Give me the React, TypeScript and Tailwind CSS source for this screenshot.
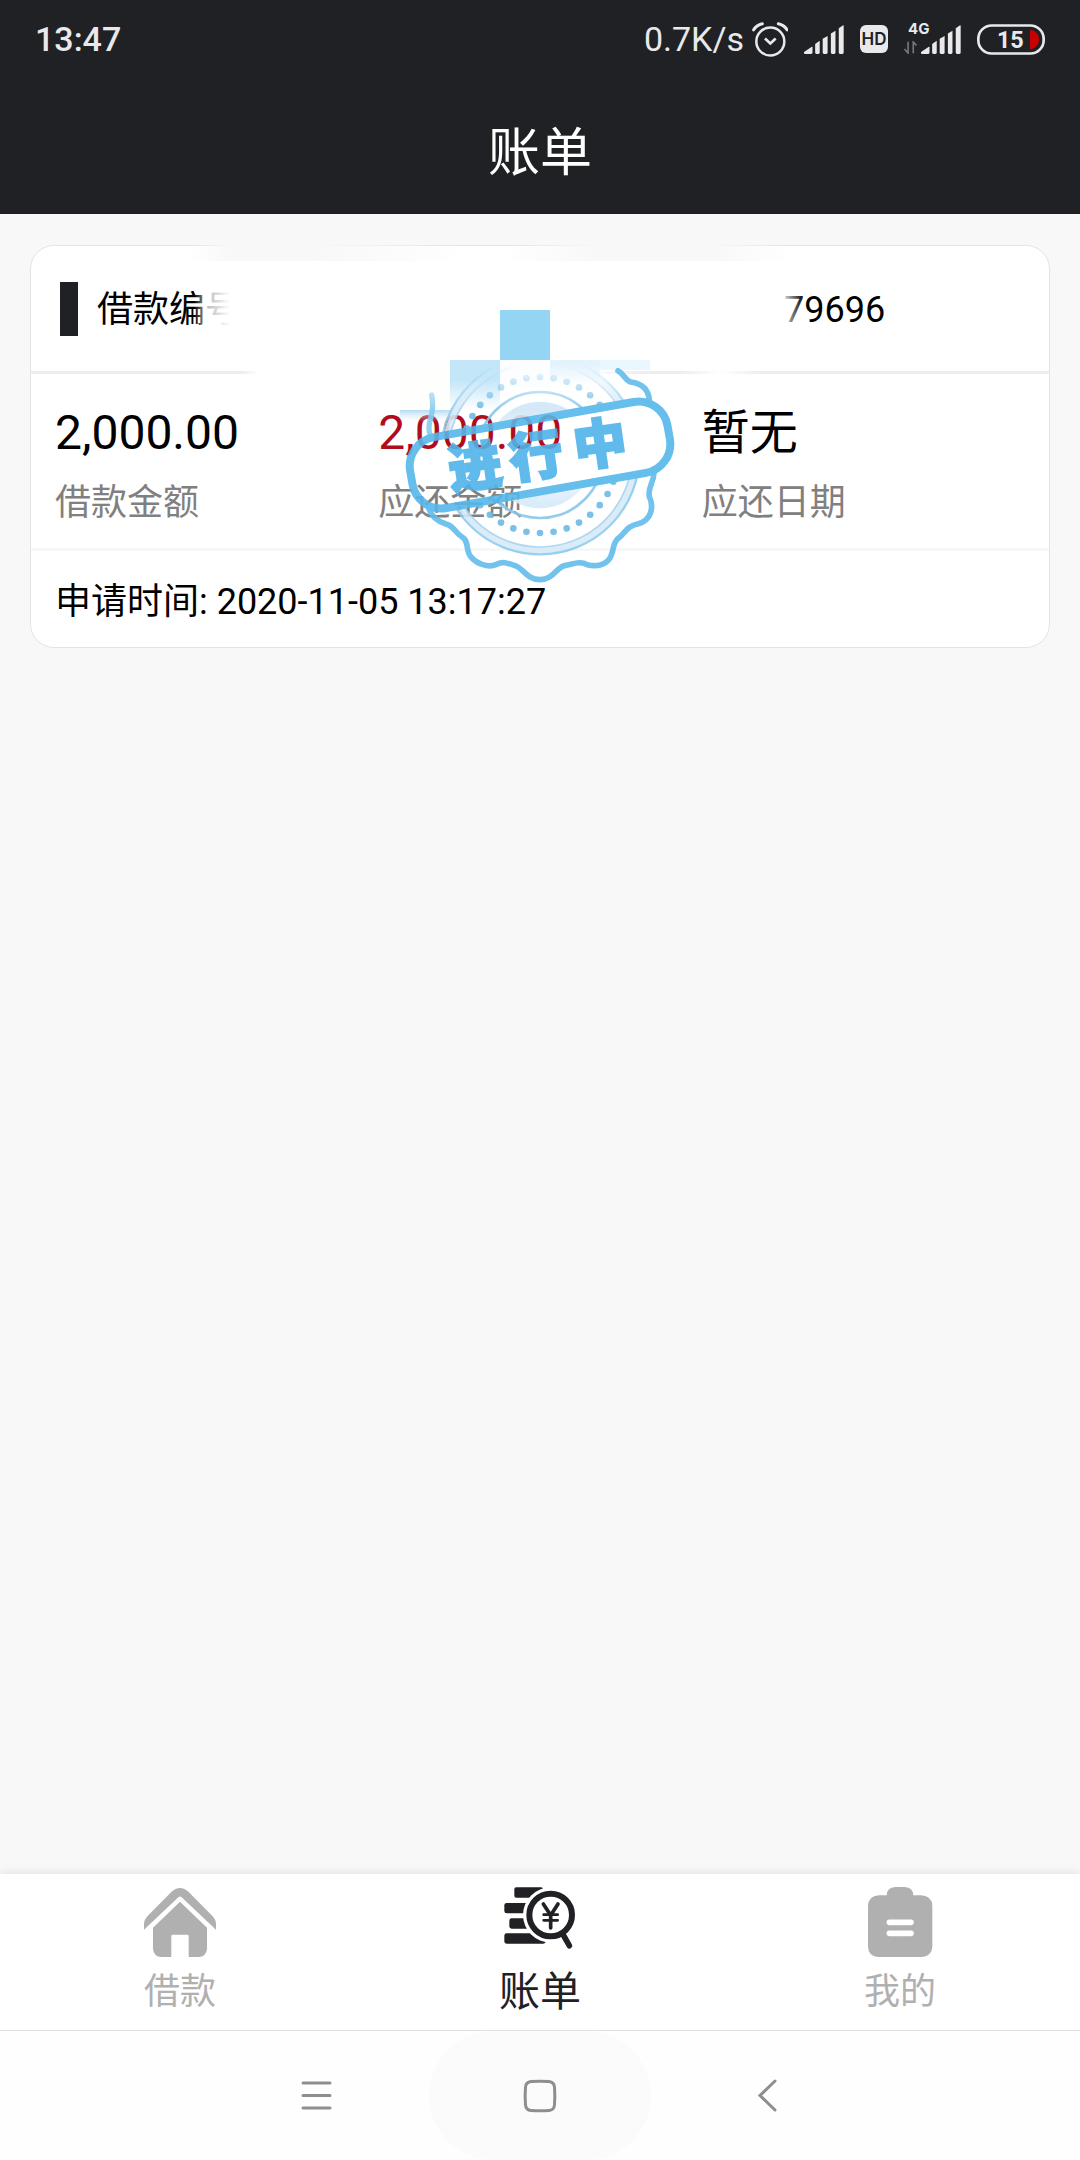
import React from 'react';

function SignalBars({ className }: { className?: string }) {
  return (
    <svg viewBox="0 0 122 88" className={className} fill="#e9e9eb" aria-hidden="true">
      <path d="M0 82 L24 66 Q26 65 26 68 V84 Q26 88 22 88 H2 Q-2 85 0 82Z" />
      <path d="M34 58 L48 48 V84 Q48 88 44 88 H38 Q34 88 34 84Z" />
      <path d="M57 42 L72 33 V84 Q72 88 68 88 H61 Q57 88 57 84Z" />
      <path d="M82 26 L96 17 V84 Q96 88 92 88 H86 Q82 88 82 84Z" />
      <path d="M106 10 L118 1 Q121 -1 121 3 V84 Q121 88 117 88 H110 Q106 88 106 84Z" />
    </svg>
  );
}

function AlarmIcon() {
  return (
    <svg viewBox="0 0 108 104" className="h-[35px] w-9" fill="none" stroke="#e9e9eb" aria-hidden="true">
      <circle cx="55" cy="58" r="42" strokeWidth="7.5" />
      <path d="M39 49 L55 64 L71 49" strokeWidth="8" />
      <path d="M5 23 Q13 9 31 5 M105 23 Q97 9 79 5" strokeWidth="9" strokeLinecap="round" />
    </svg>
  );
}

function MobileSignal() {
  return (
    <div className="relative h-[29px] w-[57px]">
      <svg viewBox="0 0 42 40" className="absolute bottom-0 left-0 h-[13px] w-[14px]" stroke="#77787b" strokeWidth="5" fill="none" aria-hidden="true">
        <path d="M12 2 V37 L1 25" />
        <path d="M28 38 V3 L38 14" />
      </svg>
      <span className="absolute -top-[5px] left-1 font-[Inter,sans-serif] text-[15px] leading-[18px] font-bold">4G</span>
      <SignalBars className="absolute right-0 bottom-0 h-[29px] w-10" />
    </div>
  );
}

function BatteryIcon() {
  return (
    <svg viewBox="0 0 204 92" className="h-[31px] w-[68px]" aria-label="电量 15%">
      <rect x="4" y="4" width="196" height="84" rx="40" fill="none" stroke="#e9e9eb" strokeWidth="8" />
      <path d="M159 17 Q186 22 186 46 Q186 70 159 76Z" fill="#c80000" />
      <text x="100" y="71" textAnchor="middle" fontFamily="Roboto, sans-serif" fontSize="70" fontWeight="700" fill="#e9e9eb">15</text>
    </svg>
  );
}

function StatusBar() {
  return (
    <div className="flex h-[88px] items-center justify-between px-[35px] pb-[10px] text-[#e9e9eb]">
      <span className="text-[34px] leading-10 font-medium">13:47</span>
      <div className="flex items-center gap-4">
        <div className="flex items-center gap-2">
          <span className="text-[34px] leading-10">0.7K/s</span>
          <AlarmIcon />
        </div>
        <SignalBars className="h-[29px] w-10" />
        <span className="flex h-7 w-7 items-center justify-center rounded-md bg-[#e9e9eb] font-[Inter,sans-serif] text-[17px] leading-7 font-semibold text-[#202124]">
          HD
        </span>
        <MobileSignal />
        <BatteryIcon />
      </div>
    </div>
  );
}

const DOTS = Array.from({ length: 36 }, (_, i) => {
  const a = (i * Math.PI) / 18;
  return { x: 480 + 234 * Math.sin(a), y: 495 - 234 * Math.cos(a) };
});

function ProgressStamp() {
  return (
    <svg viewBox="0 0 960 930" className="h-[310px] w-80" role="img" aria-label="进行中">
      <defs>
        <mask id="seal" maskUnits="userSpaceOnUse" x="0" y="0" width="960" height="930">
          <rect width="960" height="930" fill="white" />
          <rect x="85" y="385" width="790" height="220" rx="88" fill="black" transform="rotate(-10 480 495)" />
        </mask>
        <linearGradient id="fade" x1="0" y1="225" x2="0" y2="400" gradientUnits="userSpaceOnUse">
          <stop offset="0" stopColor="black" />
          <stop offset="0.2" stopColor="#444" />
          <stop offset="0.75" stopColor="white" />
        </linearGradient>
        <mask id="top" maskUnits="userSpaceOnUse" x="0" y="0" width="960" height="930">
          <rect width="960" height="930" fill="url(#fade)" />
        </mask>
        <linearGradient id="disc" x1="0" y1="0" x2="0" y2="1">
          <stop offset="0" stopColor="#c9e2f6" />
          <stop offset="0.5" stopColor="#ffffff" />
          <stop offset="1" stopColor="#d3e9f9" />
        </linearGradient>
        <linearGradient id="tileA" x1="0" y1="0" x2="0" y2="1">
          <stop offset="0.4" stopColor="#c3e6f9" />
          <stop offset="1" stopColor="#c3e6f9" stopOpacity="0" />
        </linearGradient>
        <linearGradient id="tileB" x1="0" y1="0" x2="0" y2="1">
          <stop offset="0.2" stopColor="#e3f3fd" />
          <stop offset="1" stopColor="#e3f3fd" stopOpacity="0" />
        </linearGradient>
        <linearGradient id="tileC" x1="0" y1="0" x2="0" y2="1">
          <stop offset="0" stopColor="#9fd3ef" stopOpacity="0.8" />
          <stop offset="1" stopColor="#dff1fb" stopOpacity="0" />
        </linearGradient>
      </defs>
      <rect x="360" y="60" width="150" height="150" fill="#93d5f3" />
      <rect x="60" y="210" width="150" height="150" fill="#fefefc" />
      <rect x="210" y="210" width="150" height="150" fill="url(#tileA)" />
      <rect x="360" y="210" width="150" height="80" fill="#fbfdff" />
      <rect x="510" y="210" width="150" height="75" fill="url(#tileB)" />
      <rect x="660" y="210" width="150" height="30" fill="#e8f8fe" />
      <rect x="60" y="360" width="150" height="36" fill="url(#tileC)" />
      <g opacity="0.9">
        <g mask="url(#top)">
          <g mask="url(#seal)" fill="none">
            <circle cx="480" cy="495" r="286" stroke="#d6eaf8" strokeWidth="18" />
            <circle cx="480" cy="495" r="298" stroke="#8fcbee" strokeWidth="7" />
            <circle cx="480" cy="495" r="276" stroke="#a9d3ef" strokeWidth="5" />
            <circle cx="480" cy="495" r="189" stroke="#8ac7ea" strokeWidth="8" />
            <circle cx="480" cy="495" r="160" fill="url(#disc)" />
            <g fill="#6dbbe5">
              {DOTS.map((d, i) => (
                <circle key={i} cx={d.x} cy={d.y} r="10" />
              ))}
            </g>
          </g>
          <path
            d="M155 315 Q162 350 152 385 Q143 410 150 435"
            fill="none"
            stroke="#86ccf0"
            strokeWidth="16"
            strokeLinecap="round"
          />
        </g>
        <g fill="none" stroke="#62bcec" strokeWidth="17" strokeLinecap="round" strokeLinejoin="round">
          <path d="M714 242 C730 250 735 270 752 276 C785 280 805 298 808 330" />
          <path d="M822 550 C820 580 802 595 808 620 C822 650 815 690 775 701 C740 708 736 728 715 745 C698 758 702 780 692 800 C678 828 645 830 622 824 C600 812 580 822 556 826 C530 830 522 868 480 869 C440 868 432 838 408 828 C385 820 365 812 348 824 C325 834 290 822 272 800 C256 780 268 752 245 740 C225 728 222 708 198 702 C170 694 155 680 146 655" />
        </g>
        <g transform="rotate(-10 480 495)">
          <rect x="88" y="387" width="784" height="216" rx="88" fill="none" stroke="#56b7ea" strokeWidth="24" />
        </g>
        <g
          fill="#4fb3e9"
          stroke="#4fb3e9"
          strokeWidth="7"
          fontFamily="'Noto Sans CJK SC', sans-serif"
          fontSize="160"
          fontWeight="900"
          textAnchor="middle"
        >
          <text x="285" y="587" transform="rotate(-8 285 530)">进</text>
          <text x="468" y="556" transform="rotate(-8 468 498)">行</text>
          <text x="660" y="520" transform="rotate(-8 660 462)">中</text>
        </g>
      </g>
    </svg>
  );
}

function Field({ value, label, accent }: { value: string; label: string; accent?: boolean }) {
  return (
    <div className="flex-1">
      <dd className={accent ? 'text-5xl leading-[56px] text-[#b00d1c]' : 'text-5xl leading-[56px] text-black'}>
        {value}
      </dd>
      <dt className="mt-4 text-4xl leading-[52px] text-[#808080]">{label}</dt>
    </div>
  );
}

function BillCard() {
  return (
    <article className="relative mx-[30px] mt-[31px] rounded-3xl border border-[#e4e4e4] bg-white">
      <div className="relative flex h-[125px] items-center pl-[29px]">
        <span className="h-[54px] w-[18px] bg-[#202124]" />
        <h2 className="ml-[19px] pt-[2px] text-4xl leading-[48px] text-black">借款编号</h2>
        <span className="ml-[543px] pt-[2px] text-4xl leading-[48px] text-black">79696</span>
        <div className="absolute top-10 left-[163px] h-12 w-[610px] bg-[linear-gradient(to_right,transparent,rgba(255,255,255,0.75)_14px,white_36px,white_586px,transparent)]" />
      </div>
      <div className="h-[3px] bg-[linear-gradient(to_right,#ededed_210px,white_228px,white_560px,#ededed_610px,#ededed_650px,white_690px,#ededed_730px)]" />
      <dl className="flex h-[174px] px-6 pt-[31px]">
        <Field value="2,000.00" label="借款金额" />
        <Field value="2,000.00" label="应还金额" accent />
        <Field value="暂无" label="应还日期" />
      </dl>
      <div className="h-[3px] bg-[#f7f7f7]" />
      <p className="px-6 pt-[27px] pb-[21px] text-4xl leading-[48px] text-black">申请时间: 2020-11-05 13:17:27</p>
      <div className="absolute -top-px left-[160px] h-4 w-[600px] bg-[linear-gradient(to_right,transparent,#f8f8f8_40px,#f8f8f8_120px,transparent_280px,transparent_310px,#f8f8f8_410px,#f8f8f8_520px,transparent)]" />
      <div className="pointer-events-none absolute top-11 left-[349px]">
        <ProgressStamp />
      </div>
    </article>
  );
}

function HomeIcon() {
  return (
    <svg viewBox="0 0 216 216" className="h-[72px] w-[72px]" fill="#b0b0b0" aria-hidden="true">
      <path d="M0 131 V112 Q1 101 10 91 L82 18 Q108 -6 134 18 L206 91 Q215 101 216 112 V131 L113 34 Q108 29 103 34Z" />
      <path d="M108 47 L189 125 V188 Q187 212 164 213 H136 Q134 213 134 210 V150 Q134 146 130 146 H86 Q82 146 82 150 V210 Q82 213 80 213 H52 Q29 212 27 188 V125Z" />
    </svg>
  );
}

function BillIcon() {
  return (
    <svg viewBox="0 0 216 216" className="h-[72px] w-[72px]" aria-hidden="true">
      <g fill="#202124">
        <rect x="31" y="4" width="86" height="31" rx="6" />
        <rect x="1" y="51" width="86" height="31" rx="7" />
        <rect x="16" y="97" width="70" height="31" rx="7" />
        <rect x="1" y="142" width="124" height="31" rx="7" />
      </g>
      <circle cx="140" cy="87" r="83" fill="white" />
      <g fill="none" stroke="#202124" strokeLinecap="round">
        <circle cx="140" cy="87" r="64" strokeWidth="18" />
        <path d="M178 147 L196 179" strokeWidth="17" />
        <path d="M118 54 L140 88 L162 54 M140 88 V126" strokeWidth="11" />
        <path d="M119 86 H161 M119 103 H161" strokeWidth="8" />
      </g>
    </svg>
  );
}

function MineIcon() {
  return (
    <svg viewBox="0 0 216 216" className="h-[72px] w-[72px]" aria-hidden="true">
      <path
        fill="#b0b0b0"
        d="M68 28 Q69 4 94 3 H122 Q147 4 148 28 H172 Q204 30 205 60 V182 Q203 212 172 213 H44 Q13 212 12 182 V60 Q13 30 44 28Z"
      />
      <path d="M76 109 H141 M76 142 H141" stroke="white" strokeWidth="17" strokeLinecap="round" />
    </svg>
  );
}

function TabBar() {
  return (
    <nav className="grid grid-cols-3 bg-white shadow-[0_-2px_8px_rgba(0,0,0,0.08)]">
      <a href="#loan" className="flex flex-col items-center gap-[10px] pt-3 pb-[14px] text-4xl text-[#b0b0b0]">
        <HomeIcon />
        <span className="leading-[48px]">借款</span>
      </a>
      <a href="#bill" aria-current="page" className="flex flex-col items-center gap-[10px] pt-3 pb-[14px] text-[41px] text-[#202124]">
        <BillIcon />
        <span className="leading-[48px]">账单</span>
      </a>
      <a href="#mine" className="flex flex-col items-center gap-[10px] pt-3 pb-[14px] text-4xl text-[#b0b0b0]">
        <MineIcon />
        <span className="leading-[48px]">我的</span>
      </a>
    </nav>
  );
}

function SystemNav() {
  return (
    <div className="flex h-[130px] justify-center border-t border-[#e0e0e0] bg-[#fefefe]">
      <button aria-label="菜单" className="flex w-[222px] items-center justify-center">
        <svg viewBox="0 0 36 36" className="h-9 w-9" stroke="#8e8e8e" strokeWidth="3" strokeLinecap="round">
          <path d="M3 5 H30 M3 17.5 H30 M3 30 H30" />
        </svg>
      </button>
      <button aria-label="主页" className="flex w-[222px] items-center justify-center rounded-full bg-[#fbfbfb]">
        <svg viewBox="0 0 36 36" className="h-9 w-9" fill="none" stroke="#8e8e8e" strokeWidth="3">
          <path d="M9 3.5 Q18 2.8 27 3.5 Q32 4 32.5 9 Q33.2 18 32.5 27 Q32 32 27 32.5 Q18 33.2 9 32.5 Q4 32 3.5 27 Q2.8 18 3.5 9 Q4 4 9 3.5Z" />
        </svg>
      </button>
      <button aria-label="返回" className="flex w-[222px] items-center justify-center">
        <svg viewBox="0 0 36 36" className="h-9 w-9" fill="none" stroke="#8e8e8e" strokeWidth="3" strokeLinecap="round">
          <path d="M31 3 L16 17.5 L31 32" />
        </svg>
      </button>
    </div>
  );
}

export default function App() {
  return (
    <div className="flex min-h-screen flex-col bg-[#f8f8f8] font-[Roboto,'Noto_Sans_CJK_SC',sans-serif]">
      <header className="bg-[#202124]">
        <StatusBar />
        <h1 className="flex h-[126px] items-center justify-center pt-[6px] text-[52px] leading-[64px] text-white">账单</h1>
      </header>
      <main className="flex-1">
        <BillCard />
      </main>
      <TabBar />
      <SystemNav />
    </div>
  );
}
